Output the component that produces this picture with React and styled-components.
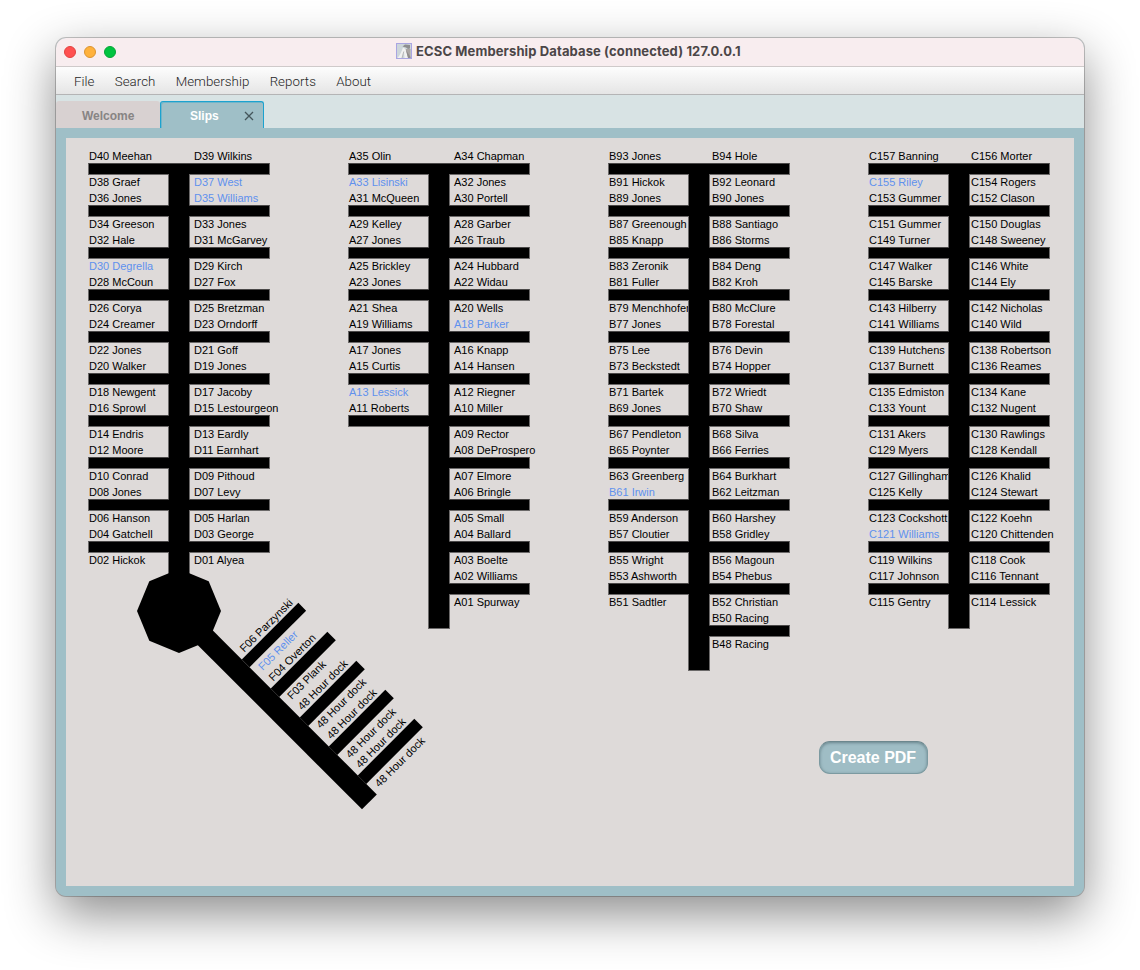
import React from "react";
import styled, { createGlobalStyle, css } from "styled-components";

const GlobalStyle = createGlobalStyle`
  *, *::before, *::after { box-sizing: border-box; }
  body { margin: 0; background: #fff; }
`;

const Desktop = styled.div`
  height: 970px;
  padding: 38px 56px 74px;
  background: #fff;
  overflow: hidden;
  font-family: "Liberation Sans", Arial, sans-serif;
`;

const Window = styled.div`
  display: flex;
  flex-direction: column;
  width: 1028px;
  height: 858px;
  border-radius: 10px;
  background: #9fbfc7;
  box-shadow: 0 0 0 1px rgba(0, 0, 0, 0.22), 0 18px 50px rgba(0, 0, 0, 0.46);
`;

const TitleBar = styled.header`
  display: flex;
  align-items: center;
  height: 29px;
  padding: 0 8px;
  border-bottom: 1px solid #cfcaca;
  border-radius: 10px 10px 0 0;
  background: #f8edef;
`;

const Lights = styled.div`
  display: flex;
  gap: 8px;
`;

const Light = styled.span`
  width: 12px;
  height: 12px;
  border-radius: 50%;
  border: 1px solid ${(p) => p.$edge};
  background: ${(p) => p.$fill};
`;

const Title = styled.h1`
  display: flex;
  align-items: center;
  gap: 4px;
  margin: -2px 0 0 280px;
  color: #4b4647;
  font: 700 13px/16px Inter, sans-serif;
  letter-spacing: 0.12px;
  white-space: nowrap;
`;

const MenuBar = styled.nav`
  display: flex;
  align-items: center;
  gap: 20.2px;
  height: 28px;
  padding: 2px 18px 0;
  border-bottom: 1px solid #b4b4b5;
  background: linear-gradient(#fdfdfd, #e5e5e5);
`;

const MenuItem = styled.span`
  color: #262626;
  font: 300 13.3px/16px Roboto, "Liberation Sans", sans-serif;
  letter-spacing: 0.05px;
  white-space: nowrap;
`;

const TabStrip = styled.div`
  display: flex;
  align-items: flex-end;
  height: 33px;
  background: #d8e3e4;
`;

const Tab = styled.div`
  display: flex;
  align-items: center;
  justify-content: space-between;
  width: 104px;
  height: 27px;
  padding: 2px 9px 0 ${(p) => (p.$active ? 29 : 26)}px;
  border-radius: 3px 3px 0 0;
  color: #878484;
  background: #d8d1d1;
  font-size: 12px;
  font-weight: 700;
  line-height: 16px;
  ${(p) =>
    p.$active &&
    css`
      height: 28px;
      padding-top: 0;
      margin-bottom: -1px;
      border: solid #1ca2cf;
      border-width: 1px 1px 0;
      color: #fff;
      background: #9fbfc7;
      box-shadow: inset 1px 1px 0 rgba(28, 162, 207, 0.35);
    `}
`;

const Page = styled.main`
  flex: 1;
  display: flex;
  padding: 10px;
  background: #9fbfc7;
  border-radius: 0 0 10px 10px;
`;

const Harbor = styled.section`
  flex: 1;
  display: flex;
  flex-direction: column;
  padding: 10px 22px 0;
  background: #dedad9;
`;

const Docks = styled.div`
  display: flex;
  align-items: flex-start;
  gap: 78px;
  height: 523px;
`;

const Dock = styled.div`
  position: relative;
  display: flex;
  width: 182px;
  flex: none;
  color: #000;
  font-size: 11px;
`;

const Side = styled.div`
  width: 80px;
  flex: none;
`;

const Spine = styled.div`
  width: 22px;
  height: ${(p) => p.$length}px;
  flex: none;
  margin-top: 15px;
  border: 1px solid #6b6969;
  border-top-color: #4a4848;
  background: #000;
`;

const Slips = styled.div`
  display: flex;
  flex-direction: column;
  justify-content: ${(p) => (p.$top ? "flex-start" : "center")};
  height: ${(p) => (p.$top ? 15 : 30)}px;
  padding-left: ${(p) => p.$inset}px;
`;

const Slip = styled.span`
  flex: none;
  height: 16px;
  line-height: 16px;
  white-space: nowrap;
  color: ${(p) => (p.$rented ? "#5f91ee" : "#000")};
`;

const Finger = styled.div`
  position: relative;
  width: 81px;
  height: 12px;
  margin-left: ${(p) => (p.$right ? -1 : 0)}px;
  border: solid #6b6969;
  border-width: ${(p) => (p.$right ? "1px 1px 1px 0" : "1px 0 1px 1px")};
  border-top-color: #4a4848;
  background: #000;
`;

const Gazebo = styled.svg`
  position: absolute;
  left: 49px;
  top: 421px;
`;

/* Branch dock that leaves the gazebo diagonally */
const Branch = styled.div`
  position: absolute;
  left: 80px;
  top: 463.3px;
  display: flex;
  transform: rotate(-45deg);
  transform-origin: 10.5px 0;
`;

const BranchSpine = styled.div`
  width: 21px;
  height: 269.5px;
  background: #000;
`;

const BranchSide = styled.div`
  padding-top: 64.2px;
`;

const BranchSlips = styled.div`
  display: flex;
  flex-direction: column;
  padding-left: 6.5px;
`;

const BranchSlip = styled(Slip)`
  position: relative;
  top: 0.8px;
  height: 14.8px;
  line-height: 14.8px;
`;

const BranchFinger = styled.div`
  width: 80px;
  height: 11.5px;
  margin-left: -0.5px;
  background: #000;
`;

const CreateButton = styled.button`
  align-self: flex-end;
  width: 109px;
  height: 33px;
  margin: 70px 124px 0 0;
  padding: 0 1px 0 0;
  border: 1px solid #7c9aa1;
  border-top-color: #6c878e;
  border-radius: 11px;
  color: #fff;
  background: #9fbdc5;
  box-shadow: inset 0 1px 3px rgba(60, 85, 92, 0.55);
  font: 700 16px/20px "Liberation Sans", Arial, sans-serif;
`;

const DOCKS = [
  {
    id: "D",
    length: 420,
    inset: 4,
    left: "40 Meehan|38 Graef|36 Jones|34 Greeson|32 Hale|*30 Degrella|28 McCoun|26 Corya|24 Creamer|22 Jones|20 Walker|18 Newgent|16 Sprowl|14 Endris|12 Moore|10 Conrad|08 Jones|06 Hanson|04 Gatchell|02 Hickok",
    right: "39 Wilkins|*37 West|*35 Williams|33 Jones|31 McGarvey|29 Kirch|27 Fox|25 Bretzman|23 Orndorff|21 Goff|19 Jones|17 Jacoby|15 Lestourgeon|13 Eardly|11 Earnhart|09 Pithoud|07 Levy|05 Harlan|03 George|01 Alyea",
  },
  {
    id: "A",
    length: 466,
    inset: 4,
    left: "35 Olin|*33 Lisinski|31 McQueen|29 Kelley|27 Jones|25 Brickley|23 Jones|21 Shea|19 Williams|17 Jones|15 Curtis|*13 Lessick|11 Roberts",
    right: "34 Chapman|32 Jones|30 Portell|28 Garber|26 Traub|24 Hubbard|22 Widau|20 Wells|*18 Parker|16 Knapp|14 Hansen|12 Riegner|10 Miller|09 Rector|08 DeProspero|07 Elmore|06 Bringle|05 Small|04 Ballard|03 Boelte|02 Williams|01 Spurway",
  },
  {
    id: "B",
    length: 508,
    inset: 2,
    left: "93 Jones|91 Hickok|89 Jones|87 Greenough|85 Knapp|83 Zeronik|81 Fuller|79 Menchhofer|77 Jones|75 Lee|73 Beckstedt|71 Bartek|69 Jones|67 Pendleton|65 Poynter|63 Greenberg|*61 Irwin|59 Anderson|57 Cloutier|55 Wright|53 Ashworth|51 Sadtler",
    right: "94 Hole|92 Leonard|90 Jones|88 Santiago|86 Storms|84 Deng|82 Kroh|80 McClure|78 Forestal|76 Devin|74 Hopper|72 Wriedt|70 Shaw|68 Silva|66 Ferries|64 Burkhart|62 Leitzman|60 Harshey|58 Gridley|56 Magoun|54 Phebus|52 Christian|50 Racing|48 Racing",
  },
  {
    id: "C",
    length: 466,
    inset: 1,
    left: "157 Banning|*155 Riley|153 Gummer|151 Gummer|149 Turner|147 Walker|145 Barske|143 Hilberry|141 Williams|139 Hutchens|137 Burnett|135 Edmiston|133 Yount|131 Akers|129 Myers|127 Gillingham|125 Kelly|123 Cockshott|*121 Williams|119 Wilkins|117 Johnson|115 Gentry",
    right: "156 Morter|154 Rogers|152 Clason|150 Douglas|148 Sweeney|146 White|144 Ely|142 Nicholas|140 Wild|138 Robertson|136 Reames|134 Kane|132 Nugent|130 Rawlings|128 Kendall|126 Khalid|124 Stewart|122 Koehn|120 Chittenden|118 Cook|116 Tennant|114 Lessick",
  },
];

const BRANCH = [
  ["F06 Parzynski"],
  ["*F05 Reller", "F04 Overton"],
  ["F03 Plank", "48 Hour dock"],
  ["48 Hour dock", "48 Hour dock"],
  ["48 Hour dock", "48 Hour dock"],
  ["48 Hour dock"],
];

// The first slip stands alone above the first finger; the rest share a berth in pairs.
function toBerths(dock, source) {
  const slips = source.split("|").map((s) => ({
    rented: s.startsWith("*"),
    text: dock + s.replace("*", ""),
  }));
  const berths = [[slips[0]]];
  for (let i = 1; i < slips.length; i += 2) berths.push(slips.slice(i, i + 2));
  return berths;
}

function DockSide({ dock, source, right, inset }) {
  const berths = toBerths(dock, source);
  return (
    <Side>
      {berths.map((berth, i) => {
        const isLast = i === berths.length - 1;
        return (
          <React.Fragment key={i}>
            <Slips $top={i === 0} $inset={inset}>
              {berth.map((s) => (
                <Slip key={s.text} $rented={s.rented}>
                  {s.text}
                </Slip>
              ))}
              {i > 0 && berth.length === 1 && <Slip aria-hidden="true" />}
            </Slips>
            {(!isLast || berth.length === 2) && <Finger $right={right} />}
          </React.Fragment>
        );
      })}
    </Side>
  );
}

function BranchDock() {
  return (
    <Branch>
      <BranchSpine />
      <BranchSide>
        {BRANCH.map((berth, i) => (
          <React.Fragment key={i}>
            <BranchSlips>
              {berth.map((s, j) => (
                <BranchSlip key={j} $rented={s.startsWith("*")}>
                  {s.replace("*", "")}
                </BranchSlip>
              ))}
            </BranchSlips>
            {i < BRANCH.length - 1 && <BranchFinger />}
          </React.Fragment>
        ))}
      </BranchSide>
    </Branch>
  );
}

function AppIcon() {
  return (
    <svg width="16" height="16" viewBox="0 0 16 16">
      <rect x="0.5" y="0.5" width="15" height="15" fill="#cdd6da" stroke="#a9a5e2" />
      <path d="M9 6h5.5v9H12z" fill="#aaa5a4" />
      <path d="M6.5 3.5 9 1.5l5 .5v3.5l-2 .5-2-1.5z" fill="#8e8e90" />
      <path d="M7 4.5C5.500 9 4 12 1.500 15H6l2-6 .5 6H12L9.500 6z" fill="#f1f1f1" />
      <path d="M10 7l4.500 7v1H12z" fill="#908d8d" />
      <path d="M7.800 8.500 6 15" stroke="#a9a9aa" strokeWidth="0.8" fill="none" />
    </svg>
  );
}

export default function App() {
  return (
    <Desktop>
      <GlobalStyle />
      <Window>
        <TitleBar>
          <Lights>
            <Light $fill="#ff5050" $edge="#e2423f" />
            <Light $fill="#ffb13c" $edge="#dc9430" />
            <Light $fill="#00c440" $edge="#06a437" />
          </Lights>
          <Title>
            <AppIcon />
            ECSC Membership Database (connected) 127.0.0.1
          </Title>
        </TitleBar>
        <MenuBar>
          <MenuItem>File</MenuItem>
          <MenuItem>Search</MenuItem>
          <MenuItem>Membership</MenuItem>
          <MenuItem>Reports</MenuItem>
          <MenuItem>About</MenuItem>
        </MenuBar>
        <TabStrip>
          <Tab>Welcome</Tab>
          <Tab $active>
            Slips
            <svg width="10" height="10" viewBox="0 0 10 10">
              <path d="M1 1 9 9M9 1 1 9" stroke="#44565b" strokeWidth="1.3" fill="none" />
            </svg>
          </Tab>
        </TabStrip>
        <Page>
          <Harbor>
            <Docks>
              {DOCKS.map((d) => (
                <Dock key={d.id}>
                  <DockSide dock={d.id} source={d.left} inset={1} />
                  <Spine $length={d.length} />
                  <DockSide dock={d.id} source={d.right} inset={d.inset} right />
                  {d.id === "D" && (
                    <>
                      <Gazebo width="84" height="84" viewBox="-42 -42 84 84">
                        <polygon
                          points="0,-42 29.7,-29.7 42,0 29.7,29.7 0,42 -29.7,29.7 -42,0 -29.7,-29.7"
                          fill="#000"
                        />
                      </Gazebo>
                      <BranchDock />
                    </>
                  )}
                </Dock>
              ))}
            </Docks>
            <CreateButton>Create PDF</CreateButton>
          </Harbor>
        </Page>
      </Window>
    </Desktop>
  );
}
